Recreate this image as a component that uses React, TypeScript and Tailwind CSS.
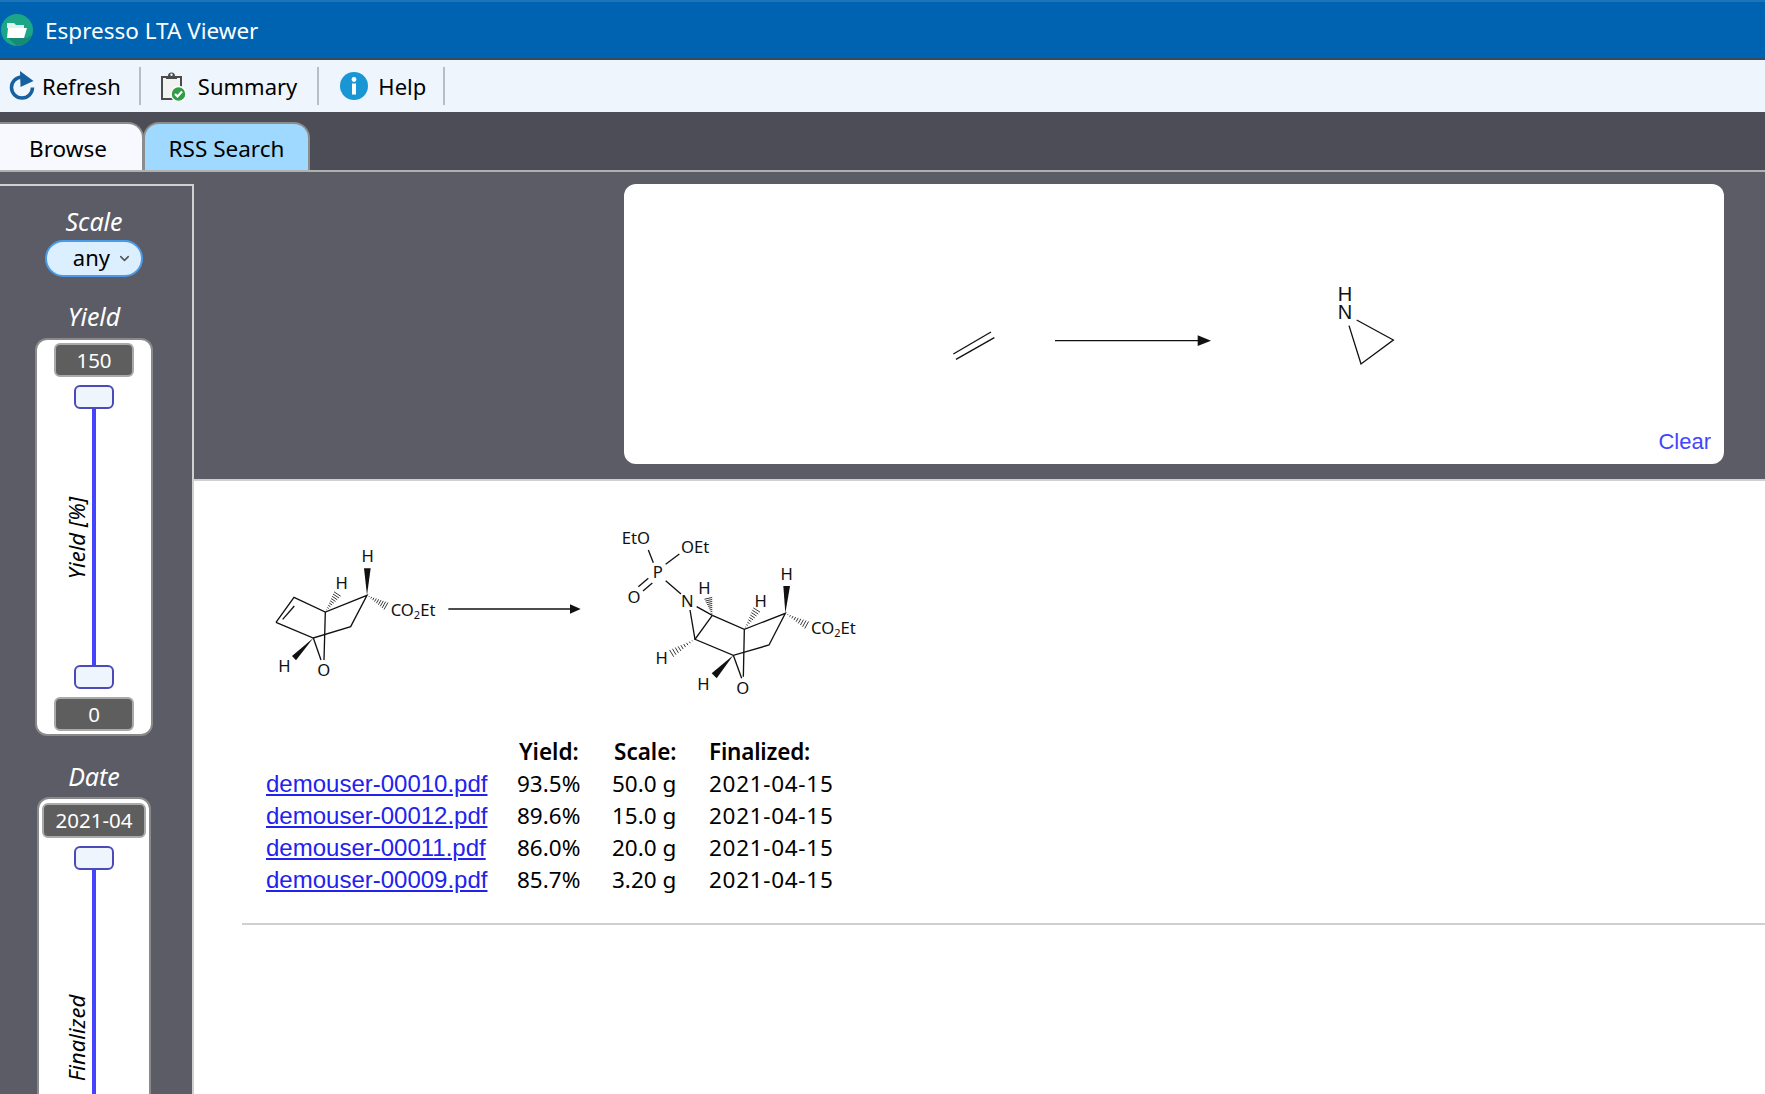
import { ChevronDown } from "lucide-react";

const rows = [
  { file: "demouser-00010.pdf", yieldPct: "93.5%", scale: "50.0 g", date: "2021-04-15" },
  { file: "demouser-00012.pdf", yieldPct: "89.6%", scale: "15.0 g", date: "2021-04-15" },
  { file: "demouser-00011.pdf", yieldPct: "86.0%", scale: "20.0 g", date: "2021-04-15" },
  { file: "demouser-00009.pdf", yieldPct: "85.7%", scale: "3.20 g", date: "2021-04-15" },
];

// hashed stereo bond, narrow at (x1,y1) and wide at (x2,y2)
function Hash({ x1, y1, x2, y2, w = 13 }: { x1: number; y1: number; x2: number; y2: number; w?: number }) {
  const n = 9;
  const dx = x2 - x1;
  const dy = y2 - y1;
  const len = Math.hypot(dx, dy);
  const nx = -dy / len;
  const ny = dx / len;
  return (
    <g stroke="#111" strokeWidth="2.5">
      {[...Array(n)].map((_, i) => {
        const t = (i + 1) / n;
        const cx = x1 + dx * t;
        const cy = y1 + dy * t;
        const h = w * t;
        return <line key={i} x1={cx - nx * h} y1={cy - ny * h} x2={cx + nx * h} y2={cy + ny * h} />;
      })}
    </g>
  );
}

function Label({ x, y, children, anchor = "middle" }: { x: number; y: number; children: React.ReactNode; anchor?: "middle" | "start" }) {
  return (
    <text x={x} y={y} textAnchor={anchor} fontSize="50" fontFamily="'Noto Sans', sans-serif" fill="#111">
      {children}
    </text>
  );
}

function Co2Et({ x, y }: { x: number; y: number }) {
  return (
    <Label x={x} y={y} anchor="start">
      CO<tspan fontSize="33" dy="8">2</tspan>
      <tspan dy="-8">Et</tspan>
    </Label>
  );
}

function Substrate() {
  return (
    <svg width="340" height="170" viewBox="0 0 1020 510" className="shrink-0">
      <g stroke="#111" strokeWidth="4" fill="none">
        <path d="M48 277 L102 202 L196 246 L321 196 L272 290 L160 324 L48 277" />
        <path d="M68 268 L103 228" />
        <path d="M196 246 L192 390" />
        <path d="M160 324 L183 390" />
        <path d="M565 237 L935 237" />
      </g>
      <polygon points="321,196 312,115 332,115" fill="#111" />
      <polygon points="160,324 96,378 108,391" fill="#111" />
      <polygon points="930,223 962,237 930,251" fill="#111" />
      <Hash x1={321} y1={196} x2={378} y2={228} w={12} />
      <Hash x1={196} y1={246} x2={232} y2={192} w={12} />
      <Label x={323} y={96}>H</Label>
      <Label x={245} y={177}>H</Label>
      <Co2Et x={392} y={258} />
      <Label x={73} y={426}>H</Label>
      <Label x={191} y={437}>O</Label>
    </svg>
  );
}

function Product() {
  return (
    <svg width="280" height="200" viewBox="0 0 840 600" className="shrink-0">
      <g stroke="#111" strokeWidth="4" fill="none">
        <path d="M160 158 L145 120" />
        <path d="M197 163 L238 132" />
        <path d="M145 205 L115 230" />
        <path d="M157 219 L129 243" />
        <path d="M197 212 L243 252" />
        <path d="M270 300 L285 388" />
        <path d="M290 290 L337 316" />
        <path d="M337 316 L285 388 L400 436 L507 405 L556 310 L433 358 L337 316" />
        <path d="M433 358 L430 500" />
        <path d="M400 436 L425 505" />
      </g>
      <polygon points="556,310 550,228 570,228" fill="#111" />
      <polygon points="400,436 335,490 350,505" fill="#111" />
      <Hash x1={556} y1={310} x2={620} y2={345} w={12} />
      <Hash x1={433} y1={358} x2={470} y2={300} w={12} />
      <Hash x1={337} y1={316} x2={325} y2={265} w={12} />
      <Hash x1={285} y1={388} x2={215} y2={430} w={12} />
      <Label x={65} y={103} anchor="start">EtO</Label>
      <Label x={243} y={129} anchor="start">OEt</Label>
      <Label x={173} y={203}>P</Label>
      <Label x={102} y={279}>O</Label>
      <Label x={262} y={290}>N</Label>
      <Label x={313} y={251}>H</Label>
      <Label x={482} y={290}>H</Label>
      <Label x={560} y={210}>H</Label>
      <Co2Et x={633} y={372} />
      <Label x={185} y={463}>H</Label>
      <Label x={310} y={539}>H</Label>
      <Label x={428} y={551}>O</Label>
    </svg>
  );
}

function QuerySketch() {
  return (
    <svg width="520" height="130" viewBox="0 0 1560 390" className="ml-[296px] mt-[76px] shrink-0">
      <g stroke="#111" strokeWidth="4" fill="none">
        <path d="M100 282 L213 216" />
        <path d="M108 298 L223 233" />
        <path d="M405 242 L835 242" />
        <path d="M1310 180 L1420 240 L1323 312 L1287 197" />
      </g>
      <polygon points="833,226 873,242 833,258" fill="#111" />
      <text x="1275" y="122" textAnchor="middle" fontSize="60" fontFamily="'Liberation Sans', sans-serif" fill="#111">H</text>
      <text x="1275" y="177" textAnchor="middle" fontSize="60" fontFamily="'Liberation Sans', sans-serif" fill="#111">N</text>
    </svg>
  );
}

function AppIcon() {
  return (
    <svg width="34" height="34" viewBox="0 0 34 34" className="shrink-0">
      <circle cx="17" cy="17" r="16" fill="#1ba688" />
      <path d="M8 25 L27 25 L32 22 A16 16 0 0 1 17 33 Z" fill="#168a72" />
      <path d="M7 13 V10 H14 L16 12 H24 V15 H7 Z" fill="#dff3ee" />
      <path d="M8 15 H27 L24 25 H7 Z" fill="#ffffff" />
    </svg>
  );
}

function RefreshIcon() {
  return (
    <svg width="26" height="30" viewBox="0 0 26 30" className="shrink-0">
      <path d="M13 6 A10.5 10.5 0 1 0 23.5 16.5" fill="none" stroke="#17609f" strokeWidth="3.5" />
      <polygon points="11,0 24.5,10 11.5,16" fill="#17609f" />
    </svg>
  );
}

function SummaryIcon() {
  return (
    <svg width="26" height="30" viewBox="0 0 26 30" className="shrink-0">
      <path d="M2 6 H21 V28 H2 Z" fill="#f2f2f0" stroke="#4b4b4b" strokeWidth="2" />
      <path d="M6 8 V5 H8 A3.5 3.5 0 0 1 15 5 H17 V8 Z" fill="#4b4b4b" />
      <circle cx="11.5" cy="3.8" r="1.2" fill="#eef5fd" />
      <circle cx="18.5" cy="23" r="7.5" fill="#2f9e44" stroke="#ffffff" strokeWidth="1.5" />
      <path d="M15 23 L17.5 25.5 L22 20.5" fill="none" stroke="#ffffff" strokeWidth="2.2" />
    </svg>
  );
}

function InfoIcon() {
  return (
    <svg width="28" height="28" viewBox="0 0 28 28" className="shrink-0">
      <circle cx="14" cy="14" r="14" fill="#1a96d4" />
      <rect x="12" y="11.5" width="4" height="11" fill="#ffffff" />
      <circle cx="14" cy="7.5" r="2.4" fill="#ffffff" />
    </svg>
  );
}

function ValueBox({ value, className }: { value: string; className: string }) {
  return (
    <div className={`flex h-[34px] items-center justify-center rounded-md border-2 border-[#aaaaaa] bg-[#5e5e5e] text-[20.5px] text-white ${className}`}>
      {value}
    </div>
  );
}

function Thumb() {
  return <div className="h-[24px] w-[40px] shrink-0 rounded-md border-2 border-[#4a4ab8] bg-[#eef5fd]" />;
}

function Divider({ className }: { className: string }) {
  return <div className={`h-[38px] w-[2px] bg-[#b8bec6] ${className}`} />;
}

export default function App() {
  return (
    <div className="flex h-screen flex-col overflow-hidden bg-white font-['Noto_Sans',sans-serif] text-[22px] text-black">
      <div className="flex h-[60px] shrink-0 items-center gap-[11px] border-t-2 border-b-2 border-t-[#1d74b8] border-b-[#3b4a5a] bg-[#0063b1] text-[22.5px] text-white">
        <AppIcon />
        <span className="pt-[1px]">Espresso LTA Viewer</span>
      </div>

      <div className="flex h-[52px] shrink-0 items-center bg-[#eef5fd]">
        <div className="ml-[9px] flex items-center gap-[7px]">
          <RefreshIcon />
          <span>Refresh</span>
        </div>
        <Divider className="ml-[18px]" />
        <div className="ml-[19px] flex items-center gap-[12px]">
          <SummaryIcon />
          <span>Summary</span>
        </div>
        <Divider className="ml-[20px]" />
        <div className="ml-[21px] flex items-center gap-[10px]">
          <InfoIcon />
          <span>Help</span>
        </div>
        <Divider className="ml-[17px]" />
      </div>

      <div className="flex h-[60px] shrink-0 items-end border-b-2 border-[#b0b0b0] bg-[#4d4d57] text-[22.5px]">
        <div className="flex h-[48px] w-[144px] items-center justify-center rounded-tr-2xl border-t-2 border-r-2 border-[#8c8c8c] bg-[#f7f9ff] pt-[3px] pr-[6px]">
          Browse
        </div>
        <div className="-ml-[1px] flex h-[48px] w-[167px] items-center justify-center rounded-t-2xl border-x-2 border-t-2 border-[#8c8c8c] bg-[#9fd9ff] pt-[3px]">
          RSS Search
        </div>
      </div>

      <div className="flex min-h-0 flex-1">
        <div className="w-[194px] shrink-0 bg-[#5c5c66] pt-[12px]">
          <div className="flex flex-col items-center border-t-2 border-r-2 border-[#d0d0d0] pr-[4px] pb-[100px]">
            <div className="mt-[19px] text-[25px] leading-[32px] text-white italic">Scale</div>
            <div className="mt-[3px] flex h-[37px] w-[98px] items-center justify-end gap-[7px] rounded-full border-2 border-[#4a9be8] bg-[#dcefff] pr-[9px]">
              <span className="-mt-[3px] leading-none">any</span>
              <ChevronDown size={15} strokeWidth={2.5} className="text-[#555555]" />
            </div>

            <div className="mt-[23px] text-[25px] leading-[32px] text-white italic">Yield</div>
            <div className="relative mt-[6px] flex h-[398px] w-[118px] flex-col items-center rounded-xl border-2 border-[#8a8a8a] bg-white pt-[3px]">
              <ValueBox value="150" className="w-[80px]" />
              <div className="mt-[8px]">
                <Thumb />
              </div>
              <div className="h-[256px] w-[4px] bg-[#4444ff]" />
              <Thumb />
              <ValueBox value="0" className="mt-[8px] w-[80px]" />
              <span className="absolute top-[198px] left-[39px] origin-center -translate-x-1/2 -translate-y-1/2 -rotate-90 whitespace-nowrap text-[22px] leading-none italic">
                Yield [%]
              </span>
            </div>

            <div className="mt-[24px] text-[25px] leading-[32px] text-white italic">Date</div>
            <div className="relative mt-[5px] flex h-[400px] w-[114px] flex-col items-center rounded-xl border-2 border-[#8a8a8a] bg-white pt-[4px]">
              <ValueBox value="2021-04" className="h-[35px] w-[104px]" />
              <div className="mt-[8px]">
                <Thumb />
              </div>
              <div className="h-[300px] w-[4px] bg-[#4444ff]" />
              <span className="absolute top-[239px] left-[37px] -translate-x-1/2 -translate-y-1/2 -rotate-90 whitespace-nowrap text-[22px] leading-none italic">
                Finalized
              </span>
            </div>
          </div>
        </div>

        <div className="flex min-w-0 flex-1 flex-col">
          <div className="shrink-0 border-b-2 border-[#d0d0d0] bg-[#5c5c66] pt-[12px] pr-[41px] pb-[15px] pl-[430px]">
            <div className="flex h-[280px] flex-col rounded-xl bg-white">
              <QuerySketch />
              <a className="mt-auto mr-[13px] mb-[6px] self-end font-['Liberation_Sans',sans-serif] text-[22px] text-[#4444ff]">Clear</a>
            </div>
          </div>

          <div className="pl-[48px]">
            <div className="mt-[49px] ml-[18px] flex">
              <Substrate />
              <div className="-mt-[20px]">
                <Product />
              </div>
            </div>

            <div className="mt-[26px] ml-[24px] grid grid-cols-[251px_95px_97px_auto] auto-rows-[32px] items-center text-[22.5px]">
              <div />
              <div className="pl-[2px] font-semibold">Yield:</div>
              <div className="pl-[2px] font-semibold">Scale:</div>
              <div className="font-semibold tracking-[-0.2px]">Finalized:</div>
              {rows.map((r) => (
                <div key={r.file} className="contents">
                  <a className="font-['Liberation_Sans',sans-serif] text-[24px] text-[#2222ee] underline">{r.file}</a>
                  <div>{r.yieldPct}</div>
                  <div>{r.scale}</div>
                  <div className="tracking-[0.7px]">{r.date}</div>
                </div>
              ))}
            </div>

            <div className="mt-[27px] h-[2px] bg-[#d0d0d0]" />
          </div>
        </div>
      </div>
    </div>
  );
}
